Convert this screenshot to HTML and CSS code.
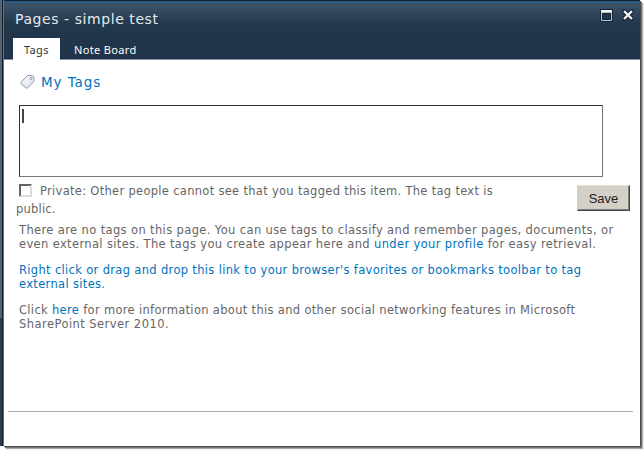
FILE: index.html
```html
<!DOCTYPE html>
<html lang="en">
<head>
<meta charset="utf-8">
<title>Pages - simple test</title>
<link rel="stylesheet" href="styles.css">
</head>
<body>
<div class="dialog">
  <header class="header">
    <div class="titlebar">
      <h1 class="title">Pages - simple test</h1>
      <div class="controls">
        <svg width="13" height="13" viewBox="0 0 13 13"><path fill="#142438" d="M0 0h13v13H0z"/><path fill="#f4f4f2" d="M1 1h11v3H1z"/><path fill="none" stroke="#c5c8cb" d="M1.500 3.500h10v8h-10z"/><path fill="#21344b" d="M3 5h7v5H3z"/></svg>
        <svg width="12" height="12" viewBox="0 0 12 12"><path d="M2.500 2.500l7 7M9.500 2.500l-7 7" stroke="#142438" stroke-width="4.500" stroke-linecap="square"/><path d="M2 2l8 8M10 2l-8 8" stroke="#f4f4f2" stroke-width="2.400"/></svg>
      </div>
    </div>
    <nav class="tabs">
      <span class="tab active">Tags</span>
      <span class="tab">Note Board</span>
    </nav>
  </header>
  <main class="content">
    <div class="heading">
      <svg width="16" height="16" viewBox="0 0 16 16"><path d="M7.500 1.500H12.500L14 3 13.700 8 7.500 14 5.500 13.800 1 9.700 1 8z" fill="#edf1f7" stroke="#8d9cb0" stroke-linejoin="round"/><path d="M2.300 9.300l3.700 3.300 6.500-5.500" fill="none" stroke="#d0d9e5"/><circle cx="11" cy="4.500" r="1.100" fill="#fff" stroke="#7c8da2" stroke-width=".8"/></svg>
      <h2>My Tags</h2>
    </div>
    <div class="tagbox"><i class="caret"></i></div>
    <div class="options">
      <div class="private">
        <div class="line l1"><i class="check"></i><span>Private: Other people cannot see that you tagged this item. The tag text is</span></div>
        <div class="line l2"><span>public.</span></div>
      </div>
      <button class="save">Save</button>
    </div>
    <div class="info">
      <p><span class="line l3">There are no tags on this page. You can use tags to classify and remember pages, documents, or</span>
      <span class="line l4">even external sites. The tags you create appear here and <a>under your profile</a> for easy retrieval.</span></p>
      <p><a><span class="line l5">Right click or drag and drop this link to your browser's favorites or bookmarks toolbar to tag</span>
      <span class="line l6">external sites.</span></a></p>
      <p><span class="line l7">Click <a>here</a> for more information about this and other social networking features in Microsoft</span>
      <span class="line l8">SharePoint Server 2010.</span></p>
    </div>
  </main>
  <footer class="footer"></footer>
</div>
</body>
</html>
```
FILE: styles.css
```css
* { box-sizing: border-box; }
body {
  margin: 0; width: 644px; height: 450px; overflow: hidden; padding-left: 3px;
  background: linear-gradient(90deg, #546477 0 2px, #17202b 2px 4px, transparent 4px) 0 0 / 100% 318px no-repeat,
    linear-gradient(90deg, #2b3b50 0 2px, #151e29 2px 4px, transparent 4px) 0 0 / 100% 446px no-repeat, #fff;
  font-family: "DejaVu Sans", Verdana, sans-serif; color: #666;
}
.dialog {
  width: 637px; height: 446px; background: #fff;
  border-left: 1px solid #1b86cb;
  box-shadow: 1px 1px 0 #4b4b4b, 2px 2px 0 #777, 3px 3px 1px #aaa;
  display: flex; flex-direction: column;
}
.header {
  height: 60px; flex: none; border-top: 1px solid #17202b;
  border-bottom: 1px solid #8396a8;
  background: linear-gradient(#1d5d91 0 1px, #3f5369 2px, #21374c 24px, #21344b 57px, #14273c 58px);
}
.titlebar { height: 37px; display: flex; justify-content: space-between; padding: 0 6px 0 11px; }
.title { margin: 9px 0 0; font-size: 14px; line-height: 18px; font-weight: 400; letter-spacing: .57px; color: #e4e9ee; }
.controls { display: flex; gap: 9px; padding-top: 8px; align-items: flex-start; }
.tabs { display: flex; height: 22px; padding-left: 9px; font: 11px/23px "Noto Sans", Tahoma, sans-serif; letter-spacing: .35px; }
.tab { padding: 0 14px; color: #fff; white-space: nowrap; }
.active { width: 47px; padding: 0 11px; background: #fff; color: #333; }
.content { flex: 1; }
.heading { display: flex; align-items: center; gap: 5px; margin: 13px 0 0 16px; height: 18px; color: #0072bc; }
h2 { margin: 0; font-size: 13.500px; font-weight: 400; line-height: 18px; letter-spacing: .9px; }
.tagbox { width: 584px; height: 72px; margin: 14px 0 0 15px; border: 1px solid #333; border-right-color: #777; border-bottom-color: #777; padding: 3px 2px; }
.caret { display: block; width: 2px; height: 14px; background: #444; }
.line { display: block; white-space: nowrap; font-size: 11.500px; line-height: 14px; }
.l1 { letter-spacing: .3px; }
.l2 { letter-spacing: .2px; }
.l3 { letter-spacing: .37px; }
.l4 { letter-spacing: .36px; }
.l5 { letter-spacing: .33px; }
.l6 { letter-spacing: .33px; }
.l7 { letter-spacing: .32px; }
.l8 { letter-spacing: .45px; }
.options { display: flex; justify-content: space-between; height: 46px; padding: 7px 10px 0 12px; }
.private .l1 { display: flex; height: 18px; }
.check { width: 13px; height: 13px; margin: 0 8px 0 3px; border: 2px solid; border-color: #666 #ddd #ddd #666; }
.save {
  width: 53px; height: 26px; margin-top: 1px; padding: 0; background: #d4d0c8; color: #222;
  border: 1px solid; border-color: #e4e1dc #444 #444 #d4d0c8; box-shadow: inset -1px -1px #808080;
  font: 13px/23px "Liberation Sans", Arial, sans-serif;
}
.info { padding-left: 15px; }
p { margin: 0 0 12px; }
a { color: #0072bc; }
.footer { height: 35px; margin: 0 7px 0 4px; border-top: 1px solid #aaa; }
```
